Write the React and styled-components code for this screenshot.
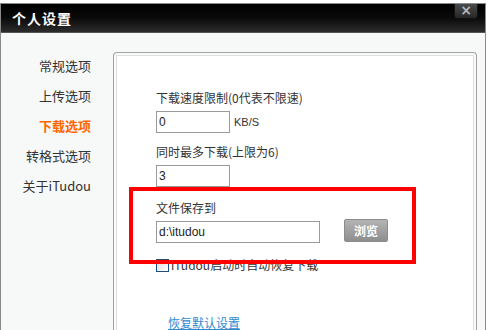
import styled, { createGlobalStyle } from "styled-components";

const GlobalStyle = createGlobalStyle`
  html, body {
    margin: 0;
    padding: 0;
    background: #fff;
    font-family: "Liberation Sans", "Noto Sans CJK SC", sans-serif;
    font-size: 12px;
    color: #333;
  }
`;

const navItems = ["常规选项", "上传选项", "下载选项", "转格式选项", "关于iTudou"];

const App = () => {
  return (
    <>
      <GlobalStyle />
      <Window>
        <TitleBar>
          <Title>个人设置</Title>
          <CloseButton>×</CloseButton>
        </TitleBar>
        <Body>
          <Nav>
            {navItems.map((item) => (
              <NavItem key={item} $active={item === "下载选项"}>
                {item}
              </NavItem>
            ))}
          </Nav>
          <Panel>
            <Label $top={37}>下载速度限制(0代表不限速)</Label>
            <Row>
              <Input $width={74}>0</Input>
              <Unit>KB/S</Unit>
            </Row>
            <Label $top={11}>同时最多下载(上限为6)</Label>
            <Row>
              <Input $width={74}>3</Input>
            </Row>
            <Label $top={13}>文件保存到</Label>
            <Row>
              <Input $width={164}>d:\itudou</Input>
              <BrowseButton>浏览</BrowseButton>
            </Row>
            <CheckRow>
              <CheckBox />
              <span>iTudou启动时自动恢复下载</span>
            </CheckRow>
            <ResetLink>恢复默认设置</ResetLink>
          </Panel>
        </Body>
        <Highlight />
      </Window>
    </>
  );
};

const Window = styled.div`
  position: relative;
  width: 484px;
  height: 340px;
  margin-top: 3px;
  border: 1px solid #8a8a8a;
  border-bottom: none;
  background: #f7f8f8;
  display: flex;
  flex-direction: column;
  overflow: hidden;
`;

const TitleBar = styled.div`
  height: 28px;
  background: linear-gradient(#000 0%, #0a0a0a 50%, #2c2c2c 100%);
  border-bottom: 1px solid #555;
  display: flex;
  justify-content: space-between;
  align-items: flex-start;
  flex-shrink: 0;
`;

const Title = styled.div`
  align-self: center;
  margin-left: 11px;
  color: #fff;
  font-family: "Noto Sans CJK SC", sans-serif;
  font-size: 14px;
  font-weight: bold;
  letter-spacing: 1px;
`;

const CloseButton = styled.div`
  width: 22px;
  height: 14px;
  margin-right: 7px;
  background: linear-gradient(#4a4a4a, #262626);
  border: 1px solid #111;
  border-top: none;
  border-radius: 0 0 3px 3px;
  color: #b5b5b5;
  font-family: "DejaVu Sans", sans-serif;
  font-weight: bold;
  font-size: 14px;
  line-height: 13px;
  text-align: center;
`;

const Body = styled.div`
  flex: 1;
  display: flex;
  gap: 22px;
`;

const Nav = styled.div`
  width: 90px;
  padding-top: 18px;
  display: flex;
  flex-direction: column;
  align-items: flex-end;
  flex-shrink: 0;
`;

const NavItem = styled.div`
  height: 30px;
  line-height: 30px;
  font-family: "Noto Sans CJK SC", sans-serif;
  font-size: 13px;
  color: ${(p) => (p.$active ? "#ff6600" : "#333")};
  font-weight: ${(p) => (p.$active ? "bold" : "normal")};
`;

const Panel = styled.div`
  flex: 1;
  margin-top: 19px;
  margin-right: 8px;
  padding-left: 42px;
  background: #fff;
  border: 1px solid #a3a3a3;
  border-bottom: none;
  border-radius: 4px 4px 0 0;
  box-shadow: inset 0 0 0 2px #fafafa, inset 0 0 0 3px #dedede;
  display: flex;
  flex-direction: column;
  align-items: flex-start;
`;

const Label = styled.div`
  margin-top: ${(p) => p.$top}px;
  margin-bottom: 5px;
  line-height: 16px;
  font-family: "Noto Sans CJK SC", sans-serif;
  font-size: 12px;
  color: #333;
`;

const Row = styled.div`
  display: flex;
  align-items: center;
`;

const Input = styled.div`
  box-sizing: border-box;
  width: ${(p) => p.$width}px;
  height: 22px;
  padding: 0 2px;
  border: 1px solid #9a9a9a;
  background: #fff;
  line-height: 20px;
  font-family: "Liberation Sans", sans-serif;
  font-size: 12px;
  color: #222;
`;

const Unit = styled.span`
  margin-left: 4px;
  font-size: 11px;
  color: #333;
`;

const BrowseButton = styled.div`
  box-sizing: border-box;
  width: 44px;
  height: 23px;
  margin-left: 24px;
  margin-top: -4px;
  border: 1px solid #8c8c8c;
  border-radius: 2px;
  background: linear-gradient(#b4b4b4, #8e8e8e);
  color: #fff;
  font-family: "Noto Sans CJK SC", sans-serif;
  font-weight: bold;
  font-size: 12px;
  line-height: 21px;
  text-align: center;
`;

const CheckRow = styled.div`
  margin-top: 14px;
  display: flex;
  align-items: center;
  gap: 2px;
  font-family: "Noto Sans CJK SC", sans-serif;
  font-size: 12px;
  line-height: 16px;
  color: #333;
`;

const CheckBox = styled.span`
  box-sizing: border-box;
  width: 13px;
  height: 13px;
  border: 1px solid #1f4e79;
  background: linear-gradient(135deg, #dcdcdc, #fff);
`;

const ResetLink = styled.a`
  margin-top: 42px;
  margin-left: 12px;
  font-family: "Noto Sans CJK SC", sans-serif;
  font-size: 12px;
  line-height: 16px;
  color: #2f8ad0;
  text-decoration: underline;
  cursor: pointer;
`;

const Highlight = styled.div`
  position: absolute;
  left: 128px;
  top: 183px;
  width: 287px;
  height: 77px;
  box-sizing: border-box;
  border: 4px solid #ff0000;
  pointer-events: none;
`;

export default App;
